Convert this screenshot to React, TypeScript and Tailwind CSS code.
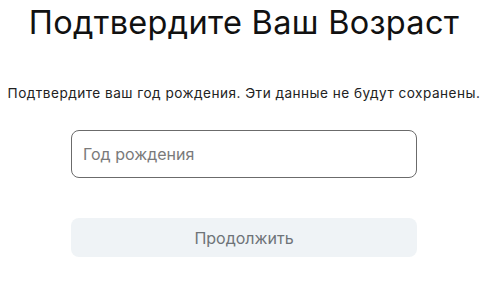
export default function App() {
  return (
    <div
      className="w-[488px] h-[307px] bg-white flex flex-col items-center text-[#111]"
      style={{ fontFamily: "Inter, 'Noto Sans', sans-serif" }}
    >
      <h1 className="mt-[3px] text-[32.5px] leading-[40px] font-normal tracking-[0.3px]">
        Подтвердите Ваш Возраст
      </h1>
      <p className="mt-[42px] text-[13.6px] leading-[16px] tracking-[0.48px] text-[#222]">
        Подтвердите ваш год рождения. Эти данные не будут сохранены.
      </p>
      <input
        type="text"
        placeholder="Год рождения"
        className="mt-[29px] w-[346px] h-[48px] rounded-[8px] border border-[#6b6b6b] px-[11px] text-[16px] placeholder:text-[#7a7a7a] outline-none"
      />
      <button className="mt-[40px] w-[346px] h-[39px] rounded-[8px] bg-[#eff3f6] text-[16px] text-[#6e7378]">
        Продолжить
      </button>
    </div>
  );
}
